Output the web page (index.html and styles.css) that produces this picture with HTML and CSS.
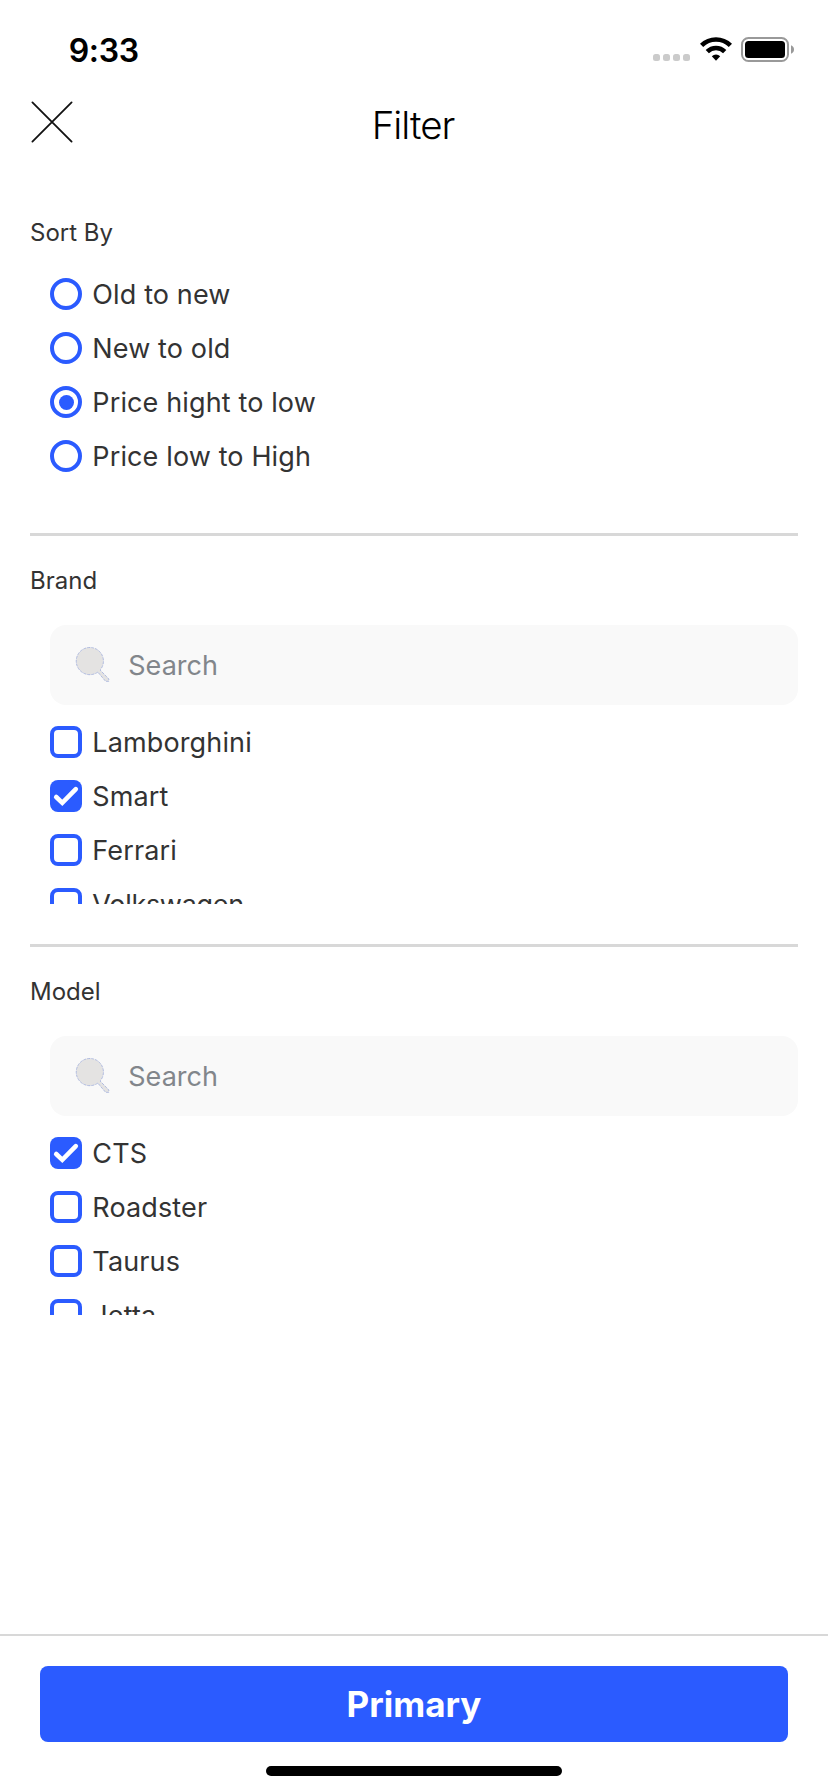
FILE: index.html
```html
<!DOCTYPE html>
<html lang="en">
<head>
<meta charset="utf-8">
<title>Filter</title>
<link rel="stylesheet" href="styles.css">
</head>
<body>
<svg width="0" height="0" class="defs">
  <symbol id="tick" viewBox="0 0 32 32"><path d="M6.2 17L12.3 22.8L25.8 9.2" fill="none" stroke="#fff" stroke-width="4.6" stroke-linecap="round" stroke-linejoin="miter"/></symbol>
  <symbol id="lens" viewBox="0 0 38 40">
    <path d="M23.8 27.1A13.6 13.6 0 1 1 26.1 25L34.8 34V36.3H31.6Z" fill="#e4e3e2" stroke="#a9b6de" stroke-width="0.9" stroke-dasharray="3 1"/>
  </symbol>
</svg>
<div class="screen">
  <div class="status">
    <span class="time">9:33</span>
    <div class="indicators">
      <div class="signal"><i></i><i></i><i></i><i></i></div>
      <svg class="wifi" width="32" height="24" viewBox="0 0 32 24">
        <g fill="none" stroke="#000" stroke-width="4.6">
          <path d="M1.6 8.4A20.6 20.6 0 0 1 30.4 8.4"/>
          <path d="M7.3 14.6A12.4 12.4 0 0 1 24.7 14.6"/>
        </g>
        <path d="M16 23.7L11.8 19.3A6 6 0 0 1 20.2 19.3Z"/>
      </svg>
      <svg class="battery" width="54" height="26" viewBox="0 0 54 26">
        <rect x="1" y="1" width="46" height="23" rx="6.5" fill="none" stroke="#999" stroke-width="2"/>
        <rect x="4" y="4" width="40" height="17" rx="3.5"/>
        <path d="M50 8.3Q53 9.5 53 12.5T50 16.7Z" fill="#999"/>
      </svg>
    </div>
  </div>
  <header class="header">
    <svg class="close" width="44" height="44" viewBox="0 0 44 44"><path d="M2.4 2.4L41.6 41.6M41.6 2.4L2.4 41.6" stroke="#111" stroke-width="1.8" stroke-linecap="round"/></svg>
    <h1 class="title">Filter</h1>
  </header>
  <main class="content">
    <section class="group sort">
      <h2 class="label">Sort By</h2>
      <div class="options">
        <div class="option"><span class="radio"></span><span class="name">Old to new</span></div>
        <div class="option"><span class="radio"></span><span class="name">New to old</span></div>
        <div class="option"><span class="radio on"></span><span class="name">Price hight to low</span></div>
        <div class="option"><span class="radio"></span><span class="name">Price low to High</span></div>
      </div>
    </section>
    <section class="group ruled">
      <h2 class="label">Brand</h2>
      <div class="search"><svg class="lens" width="38" height="40"><use href="#lens"/></svg><span class="name">Search</span></div>
      <div class="options list">
        <div class="option"><span class="box"></span><span class="name">Lamborghini</span></div>
        <div class="option"><span class="box on"><svg width="32" height="32"><use href="#tick"/></svg></span><span class="name">Smart</span></div>
        <div class="option"><span class="box"></span><span class="name">Ferrari</span></div>
        <div class="option"><span class="box"></span><span class="name tight">Volkswagen</span></div>
      </div>
    </section>
    <section class="group ruled">
      <h2 class="label">Model</h2>
      <div class="search"><svg class="lens" width="38" height="40"><use href="#lens"/></svg><span class="name">Search</span></div>
      <div class="options list">
        <div class="option"><span class="box on"><svg width="32" height="32"><use href="#tick"/></svg></span><span class="name">CTS</span></div>
        <div class="option"><span class="box"></span><span class="name">Roadster</span></div>
        <div class="option"><span class="box"></span><span class="name">Taurus</span></div>
        <div class="option"><span class="box"></span><span class="name">Jetta</span></div>
      </div>
    </section>
  </main>
  <footer class="footer">
    <div class="primary">Primary</div>
    <div class="home"></div>
  </footer>
</div>
</body>
</html>
```
FILE: styles.css
```css
* { box-sizing: border-box; }
body { margin: 0; background: #fff; font-family: Inter, "Liberation Sans", sans-serif; }
.defs { display: none; }
.screen { width: 828px; height: 1792px; display: flex; flex-direction: column; background: #fff; overflow: hidden; }

.status { height: 88px; padding: 29px 34px 0 68.7px; display: flex; justify-content: space-between; align-items: flex-start; }
.time { padding-top: 1px; font-size: 32px; font-weight: 600; line-height: 41px; letter-spacing: -0.34px; color: #000; }
.indicators { display: flex; align-items: flex-start; padding-top: 8px; margin-right: -1px; }
.signal { display: flex; gap: 3px; padding-top: 17px; margin-right: 9.5px; }
.signal i { width: 7px; height: 7px; border-radius: 2.5px; background: #cbcbcb; }
.wifi { margin-right: 9.5px; }
.wifi, .battery, .close, .lens { display: block; flex: none; }

.header { height: 94px; padding: 12px 30px 0; display: grid; grid-template-columns: 44px 1fr 44px; align-items: start; }
.title { margin: 2px 0 0; padding-right: 2px; font-size: 38.5px; font-weight: 300; line-height: 46px; letter-spacing: -1.02px; text-align: center; color: #000; }

.content { flex: 1; padding: 0 30px; }
.label { margin: 0; padding-top: 1px; height: 30px; font-size: 24px; font-weight: 400; line-height: 30px; color: #333; }
.sort { padding-top: 35px; height: 351px; }
.sort .options { margin-top: 31px; }
.ruled { border-top: 3px solid #d8d8d8; height: 411px; padding-top: 29px; }
.options { padding-left: 20px; display: flex; flex-direction: column; gap: 22px; }
.list { margin-top: 21px; height: 178px; overflow: hidden; }
.option { flex: none; height: 32px; display: flex; align-items: center; gap: 10.3px; font-size: 27px; line-height: 32px; letter-spacing: 0.13px; color: #333; white-space: nowrap; }
.name { padding-top: 2px; }
.tight { letter-spacing: -0.3px; }

.radio, .box { width: 32px; height: 32px; flex: none; border: 4px solid #2b5bff; }
.radio { border-radius: 50%; display: grid; place-items: center; }
.radio.on::before { content: ""; width: 15px; height: 15px; border-radius: 50%; background: #2b5bff; }
.box { border-radius: 8px; }
.box.on { border: 0; background: #2b5bff; }
.box svg { display: block; }

.search { margin: 30px 0 0 20px; height: 80px; border-radius: 16px; background: #f9f9f9; padding-left: 24px; display: flex; align-items: center; gap: 16.3px; font-size: 27px; line-height: 32px; color: #82868b; }

.footer { height: 158px; border-top: 2px solid #d8d8d8; padding: 30px 40px 0; display: flex; flex-direction: column; align-items: center; }
.primary { width: 748px; height: 76px; border-radius: 8px; background: #2b5bff; color: #fff; font-size: 35px; font-weight: 700; line-height: 76px; text-align: center; }
.home { width: 296px; height: 10px; margin-top: 24px; border-radius: 5px; background: #000; }
```
